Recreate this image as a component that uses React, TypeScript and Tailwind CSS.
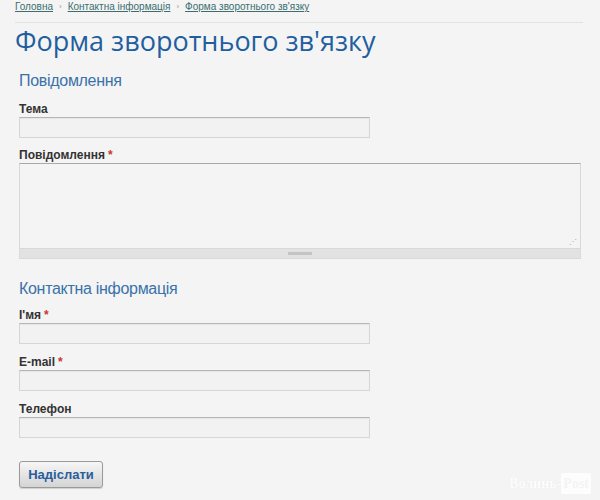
import React from "react";

const Label = ({ text, req }: { text: string; req?: boolean }) => (
  <div className="text-[12px] font-bold text-[#333] leading-[14px] mb-[1px]">
    {text}
    {req && <span className="text-[#c33] ml-[3px]">*</span>}
  </div>
);

const Input = () => (
  <div className="w-[351px] h-[21px] bg-[#f2f2f2] border border-[#d6d6d6] border-t-[#b5b5b5] shadow-[inset_0_1px_1px_rgba(0,0,0,0.05)]" />
);

export default function App() {
  return (
    <div
      className="w-[600px] h-[500px] bg-[#f4f4f4] relative overflow-hidden"
      style={{ fontFamily: '"Liberation Sans", Arial, sans-serif' }}
    >
      <div className="px-[15px]">
        <div className="flex items-center text-[10px] leading-[10px] pt-[1px] h-[13px] text-[#3b6e6e]">
          <span className="underline">Головна</span>
          <span className="text-[#999] mx-[6px] text-[8px]">›</span>
          <span className="underline">Контактна інформація</span>
          <span className="text-[#999] mx-[6px] text-[8px]">›</span>
          <span className="underline">Форма зворотнього зв'язку</span>
        </div>
        <div className="mt-[9px] w-[568px] border-t border-[#e2e2e2]" />
        <h1
          className="text-[27px] leading-[34px] text-[#1f5f9f] mt-[1px]"
          style={{ fontFamily: '"Open Sans", sans-serif' }}
        >
          Форма зворотнього зв'язку
        </h1>
      </div>
      <div className="px-[19px]">
        <div className="text-[16px] tracking-[-0.3px] leading-[20px] text-[#3a72a8] mt-[13px] mb-[11px]">Повідомлення</div>
        <Label text="Тема" />
        <Input />
        <div className="mt-[10px]">
          <Label text="Повідомлення" req />
        </div>
        <div className="w-[562px]">
          <div className="h-[86px] bg-[#f4f4f4] border border-[#d8d8d8] border-t-[#a9a9a9] relative">
            <div className="absolute right-[3px] bottom-[2px] text-[8px] leading-[8px] text-[#aaa]">⋰</div>
          </div>
          <div className="h-[10px] bg-[#e2e2e2] border border-[#dadada] border-t-0 flex items-center justify-center">
            <div className="w-[24px] h-[3px] bg-[#c4c4c4]" />
          </div>
        </div>
        <div className="text-[16px] tracking-[-0.3px] leading-[20px] text-[#3a72a8] mt-[20px] mb-[9px]">Контактна інформація</div>
        <Label text="І'мя" req />
        <Input />
        <div className="mt-[11px]">
          <Label text="E-mail" req />
        </div>
        <Input />
        <div className="mt-[11px]">
          <Label text="Телефон" />
        </div>
        <Input />
        <button className="mt-[23px] w-[84px] h-[27px] rounded-[3px] border border-[#9a9a9a] bg-gradient-to-b from-[#f6f6f6] to-[#d4d4d4] text-[13px] font-bold text-[#2a5d9a] shadow-[0_1px_1px_rgba(0,0,0,0.15)]">
          Надіслати
        </button>
      </div>
      <div className="absolute right-[9px] bottom-[6px] flex items-center text-[14px] font-bold text-white opacity-90" style={{ fontFamily: '"Liberation Serif", serif' }}>
        <span className="[text-shadow:0_0_1px_rgba(0,0,0,0.08)]">Волинь-</span>
        <span className="bg-white text-[#f4f4f4] px-[2px] rounded-[2px]">Post</span>
      </div>
    </div>
  );
}
